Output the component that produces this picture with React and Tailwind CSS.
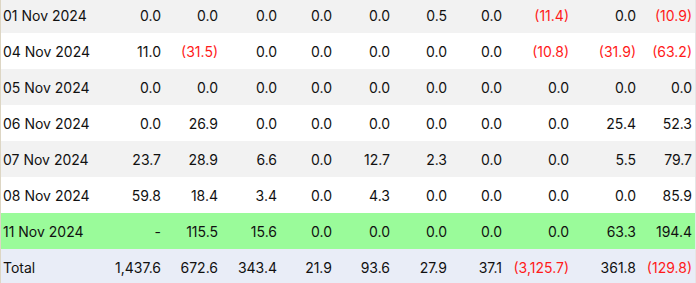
const rows = [
  { date: '01 Nov 2024', vals: ['0.0', '0.0', '0.0', '0.0', '0.0', '0.5', '0.0', '(11.4)', '0.0', '(10.9)'], bg: 'bg-[#f2f2f2]' },
  { date: '04 Nov 2024', vals: ['11.0', '(31.5)', '0.0', '0.0', '0.0', '0.0', '0.0', '(10.8)', '(31.9)', '(63.2)'], bg: 'bg-white' },
  { date: '05 Nov 2024', vals: ['0.0', '0.0', '0.0', '0.0', '0.0', '0.0', '0.0', '0.0', '0.0', '0.0'], bg: 'bg-[#f2f2f2]' },
  { date: '06 Nov 2024', vals: ['0.0', '26.9', '0.0', '0.0', '0.0', '0.0', '0.0', '0.0', '25.4', '52.3'], bg: 'bg-white' },
  { date: '07 Nov 2024', vals: ['23.7', '28.9', '6.6', '0.0', '12.7', '2.3', '0.0', '0.0', '5.5', '79.7'], bg: 'bg-[#f2f2f2]' },
  { date: '08 Nov 2024', vals: ['59.8', '18.4', '3.4', '0.0', '4.3', '0.0', '0.0', '0.0', '0.0', '85.9'], bg: 'bg-white' },
  { date: '11 Nov 2024', vals: ['-', '115.5', '15.6', '0.0', '0.0', '0.0', '0.0', '0.0', '63.3', '194.4'], bg: 'bg-[#9afb9a]' },
  { date: 'Total', vals: ['1,437.6', '672.6', '343.4', '21.9', '93.6', '27.9', '37.1', '(3,125.7)', '361.8', '(129.8)'], bg: 'bg-[#e9edf7]' },
];

const widths = ['w-[106px]', 'w-[57px]', 'w-[57px]', 'w-[59px]', 'w-[55px]', 'w-[58px]', 'w-[57px]', 'w-[55px]', 'w-[67px]', 'w-[67px]', 'w-[56px]'];

export default function App() {
  return (
    <div className="w-[696px] h-[283px] overflow-hidden bg-white">
      <div className="-mt-[3px] border-l border-r border-l-[#ddd6c4] border-r-[#e6e6e6]">
        <table className="w-full table-fixed border-collapse font-['Inter',sans-serif] text-[14px] text-[#111]">
          <colgroup>
            {widths.map((w, i) => (
              <col key={i} className={w} />
            ))}
          </colgroup>
          <tbody>
            {rows.map((r) => (
              <tr key={r.date} className={`h-[36px] ${r.bg}`}>
                <td className="pl-[2px] text-left whitespace-nowrap">{r.date}</td>
                {r.vals.map((v, i) => (
                  <td
                    key={i}
                    className={`pr-[3px] text-right whitespace-nowrap ${v.startsWith('(') ? 'text-[#ff1a1a]' : ''}`}
                  >
                    {v}
                  </td>
                ))}
              </tr>
            ))}
          </tbody>
        </table>
      </div>
    </div>
  );
}
